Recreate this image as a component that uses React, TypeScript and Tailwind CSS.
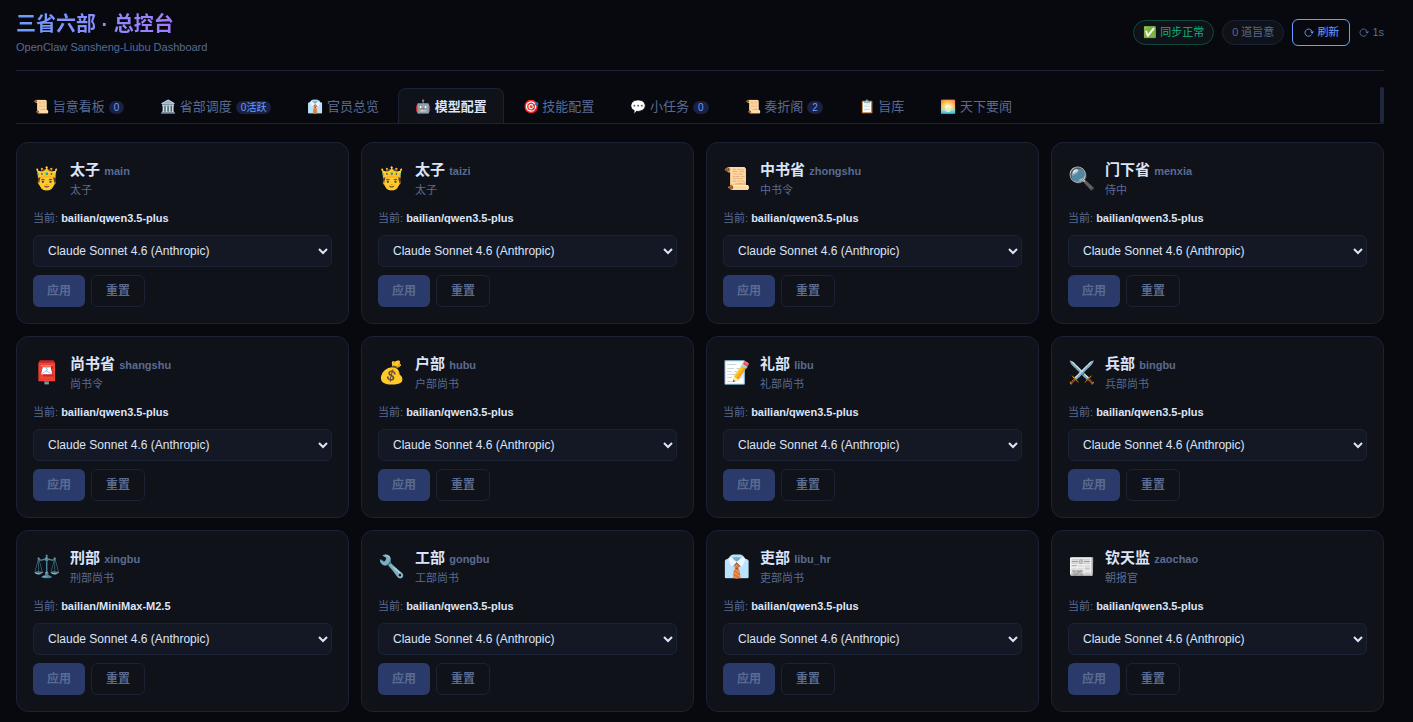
import { useState } from "react";

const MODELS = [
  "Claude Sonnet 4.6 (Anthropic)",
  "Claude Opus 4.5 (Anthropic)",
  "bailian/qwen3.5-plus",
  "bailian/MiniMax-M2.5",
];

const TABS = [
  { icon: "📜", label: "旨意看板", badge: "0" },
  { icon: "🏛️", label: "省部调度", badge: "0活跃" },
  { icon: "👔", label: "官员总览" },
  { icon: "🤖", label: "模型配置" },
  { icon: "🎯", label: "技能配置" },
  { icon: "💬", label: "小任务", badge: "0" },
  { icon: "📜", label: "奏折阁", badge: "2" },
  { icon: "📋", label: "旨库" },
  { icon: "🌅", label: "天下要闻" },
];

const AGENTS = [
  { id: "main", icon: "🤴", name: "太子", role: "太子", model: "bailian/qwen3.5-plus" },
  { id: "taizi", icon: "🤴", name: "太子", role: "太子", model: "bailian/qwen3.5-plus" },
  { id: "zhongshu", icon: "📜", name: "中书省", role: "中书令", model: "bailian/qwen3.5-plus" },
  { id: "menxia", icon: "🔍", name: "门下省", role: "侍中", model: "bailian/qwen3.5-plus" },
  { id: "shangshu", icon: "📮", name: "尚书省", role: "尚书令", model: "bailian/qwen3.5-plus" },
  { id: "hubu", icon: "💰", name: "户部", role: "户部尚书", model: "bailian/qwen3.5-plus" },
  { id: "libu", icon: "📝", name: "礼部", role: "礼部尚书", model: "bailian/qwen3.5-plus" },
  { id: "bingbu", icon: "⚔️", name: "兵部", role: "兵部尚书", model: "bailian/qwen3.5-plus" },
  { id: "xingbu", icon: "⚖️", name: "刑部", role: "刑部尚书", model: "bailian/MiniMax-M2.5" },
  { id: "gongbu", icon: "🔧", name: "工部", role: "工部尚书", model: "bailian/qwen3.5-plus" },
  { id: "libu_hr", icon: "👔", name: "吏部", role: "吏部尚书", model: "bailian/qwen3.5-plus" },
  { id: "zaochao", icon: "📰", name: "钦天监", role: "朝报官", model: "bailian/qwen3.5-plus" },
];

type Agent = (typeof AGENTS)[number];

function RefreshIcon() {
  return (
    <svg viewBox="0 0 11 11" className="size-[11px]" fill="none" stroke="currentColor" aria-hidden="true">
      <path d="M8.6 7.6A3.6 3.6 0 1 1 8.9 4.2" strokeWidth="0.9" />
      <path d="M7 4.4h4L9.2 6.8Z" fill="currentColor" stroke="none" />
    </svg>
  );
}

function AgentCard({ agent }: { agent: Agent }) {
  const [model, setModel] = useState(MODELS[0]);
  const changed = model !== MODELS[0];

  return (
    <section className="rounded-xl border border-[#1c2236] bg-[#0f1219] p-4">
      <div className="mb-3 flex items-center gap-2.5">
        <span className="text-[22px] leading-8">{agent.icon}</span>
        <div>
          <h2 className="text-[15px] leading-[22px] font-bold">
            {agent.name} <span className="text-[11px] text-[#5a6b92]">{agent.id}</span>
          </h2>
          <p className="text-[11px] leading-4 text-[#5a6b92]">{agent.role}</p>
        </div>
      </div>
      <p className="mb-2 text-[11px] leading-[17px] text-[#5a6b92]">
        当前: <b className="text-[#dde4f8]">{agent.model}</b>
      </p>
      <select
        aria-label={`${agent.name} ${agent.id}`}
        value={model}
        onChange={(e) => setModel(e.target.value)}
        className="mb-2 block h-8 w-full rounded-md border border-[#1c2236] bg-[#141824] px-2.5 text-xs text-[#dde4f8]"
      >
        {MODELS.map((m) => (
          <option key={m}>{m}</option>
        ))}
      </select>
      <div className="flex gap-1.5">
        <button
          disabled={!changed}
          className="h-8 rounded-md bg-[#6a9eff] px-3.5 text-xs font-bold text-white disabled:bg-[#2a3a6a] disabled:text-[#5a6b92]"
        >
          应用
        </button>
        <button
          onClick={() => setModel(MODELS[0])}
          className="h-8 rounded-md border border-[#1c2236] px-3.5 text-xs font-bold text-[#5a6b92]"
        >
          重置
        </button>
      </div>
    </section>
  );
}

export default function App() {
  const [active, setActive] = useState("模型配置");

  return (
    <div className="min-h-screen bg-[#07090f] pt-[9px] pr-[29px] pb-2.5 pl-4 font-['Liberation_Sans','Noto_Sans_CJK_SC',sans-serif] text-sm text-[#dde4f8]">
      <header className="mb-4 flex items-center justify-between border-b border-[#1c2236] pb-[15px]">
        <div>
          <h1 className="w-fit bg-linear-to-r from-[#6a9eff] to-[#a07aff] bg-clip-text text-xl leading-[30px] font-bold text-transparent">
            三省六部 · 总控台
          </h1>
          <p className="text-[11px] leading-4 text-[#5a6b92]">OpenClaw Sansheng-Liubu Dashboard</p>
        </div>
        <div className="flex items-center gap-2 text-[11px] leading-[17px]">
          <span className="rounded-full border border-[#0e4a3c] bg-[#0f1219] px-[9px] py-[3px] text-[#0fb47c]">✅ 同步正常</span>
          <span className="rounded-full border border-[#1c2236] bg-[#0f1219] px-[9px] py-[3px] text-[#5a6b92]">0 道旨意</span>
          <button className="flex items-center gap-[3px] rounded-md border border-[#6a9eff] px-2.5 py-1 text-[#6a9eff]">
            <RefreshIcon />
            刷新
          </button>
          <span className="flex items-center gap-[3px] text-[#5a6b92]">
            <RefreshIcon />
            1s
          </span>
        </div>
      </header>

      <nav className="mb-[18px] flex items-end gap-0.5 border-b border-[#1c2236] text-[13px]">
        {TABS.map((tab) => (
          <button
            key={tab.label}
            onClick={() => setActive(tab.label)}
            className={
              tab.label === active
                ? "h-[35px] rounded-t-lg border border-b-0 border-[#1c2236] bg-[#0f1219] px-4 pt-0.5 font-bold"
                : "h-[35px] border border-b-0 border-transparent px-4 pt-0.5 text-[#5a6b92]"
            }
          >
            {tab.icon} {tab.label}
            {tab.badge && (
              <span className="ml-1 rounded-full bg-[#1a2142] px-[5px] py-px text-[10px] text-[#6a9eff]">{tab.badge}</span>
            )}
          </button>
        ))}
        <span className="ml-auto h-9 w-1 rounded-xs bg-[#1f273c]" />
      </nav>

      <main className="grid grid-cols-4 gap-3">
        {AGENTS.map((agent) => (
          <AgentCard key={agent.id} agent={agent} />
        ))}
      </main>
    </div>
  );
}
